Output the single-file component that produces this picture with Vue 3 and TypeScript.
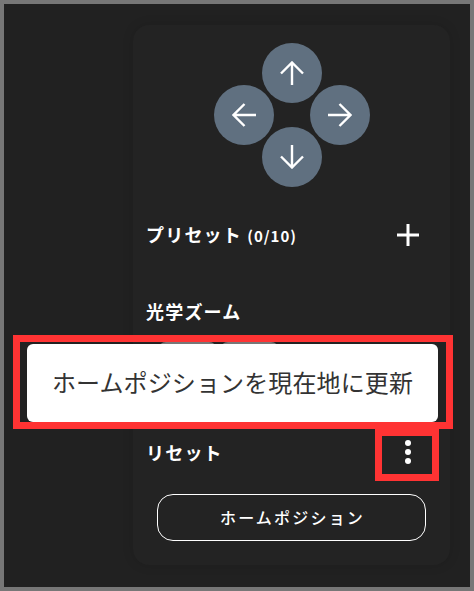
<script setup lang="ts">
type Dir = { name: string; d: string }
const dirs: Dir[] = [
  { name: 'up', d: 'M12 24V2M1 12.5 12 1.5l11 11' },
  { name: 'left', d: 'M24 12H2M12.5 1 1.5 12l11 11' },
  { name: 'right', d: 'M0 12h22M11.5 1l11 11-11 11' },
  { name: 'down', d: 'M12 0v22M1 11.5l11 11 11-11' },
]
</script>

<template>
  <div class="frame">
    <section class="panel">
      <div class="pad">
        <button v-for="dir in dirs" :key="dir.name" class="arrow" :class="dir.name">
          <svg width="24" height="24" viewBox="0 0 24 24" fill="none" stroke="#fff" stroke-width="2.4">
            <path :d="dir.d" />
          </svg>
        </button>
      </div>

      <div class="row preset">
        <h2 class="label">プリセット <small>(0/10)</small></h2>
        <svg class="plus" width="24" height="24" viewBox="0 0 24 24" fill="none" stroke="#fff" stroke-width="3">
          <path d="M12 1v22M1 12h22" />
        </svg>
      </div>

      <h2 class="label zoom-label">光学ズーム</h2>
      <div class="zoom-buttons">
        <span class="seg"></span>
        <span class="seg"></span>
      </div>

      <div class="row reset">
        <h2 class="label">リセット</h2>
        <span class="more">
          <i></i><i></i><i></i>
        </span>
      </div>

      <button class="home">ホームポジション</button>
    </section>

    <div class="highlight big"></div>
    <div class="menu">ホームポジションを現在地に更新</div>
    <div class="highlight small"></div>
  </div>
</template>

<style>
html, body { margin: 0; background: #222; }
</style>

<style scoped>
.frame {
  position: relative;
  box-sizing: border-box;
  width: 474px;
  height: 591px;
  padding: 21px 20px 22px 129px;
  border: 4px solid #777;
  background: #212121;
  font-family: "Noto Sans CJK JP", sans-serif;
  color: #fff;
  overflow: hidden;
}
.panel {
  box-sizing: border-box;
  width: 317px;
  height: 540px;
  padding: 18px 24px 0 13px;
  border-radius: 16px;
  background: #232323;
  box-shadow: 0 0 12px rgba(0, 0, 0, 0.12);
}
.pad {
  position: relative;
  width: 156px;
  height: 144px;
  margin-left: 68px;
}
.arrow {
  position: absolute;
  display: flex;
  align-items: center;
  justify-content: center;
  width: 60px;
  height: 60px;
  padding: 0;
  border: 0;
  border-radius: 50%;
  background: #607080;
}
.up { left: 48px; top: 0; }
.left { left: 0; top: 42px; }
.right { left: 96px; top: 42px; }
.down { left: 48px; top: 84px; }
.row {
  display: flex;
  align-items: center;
  justify-content: space-between;
}
.label {
  margin: 0;
  font-size: 18px;
  font-weight: 700;
  letter-spacing: 1.2px;
  line-height: 24px;
}
.label small {
  font-family: "Noto Sans CJK JP", sans-serif;
  font-size: 15px;
  letter-spacing: 1px;
}
.preset {
  margin-top: 36px;
  padding-right: 6px;
  height: 24px;
}
.zoom-label {
  margin-top: 52px;
}
.zoom-buttons {
  display: flex;
  gap: 3px;
  margin: 19px 0 0 12px;
}
.seg {
  width: 59px;
  height: 40px;
  border-radius: 8px 8px 0 0;
  background: #777;
}
.reset {
  margin-top: 58px;
}
.more {
  display: flex;
  flex-direction: column;
  gap: 3px;
  margin-right: 15px;
}
.more i {
  width: 6px;
  height: 6px;
  border-radius: 50%;
  background: #fff;
}
.home {
  display: block;
  box-sizing: border-box;
  width: 269px;
  height: 47px;
  margin: 30px 0 0 11px;
  padding: 0 0 1px 2px;
  border: 1px solid #fff;
  border-radius: 16px;
  background: transparent;
  color: #fff;
  font-family: inherit;
  font-size: 16px;
  font-weight: 500;
  letter-spacing: 2.2px;
}
.highlight {
  position: absolute;
  box-sizing: border-box;
  border: 7px solid #ff3333;
}
.big { left: 9px; top: 331px; width: 440px; height: 94px; }
.small { left: 371px; top: 425px; width: 64px; height: 52px; }
.menu {
  position: absolute;
  left: 23px;
  top: 340px;
  box-sizing: border-box;
  width: 411px;
  height: 78px;
  padding-bottom: 3px;
  display: flex;
  align-items: center;
  justify-content: center;
  border-radius: 6px;
  background: #fff;
  color: #333;
  font-size: 24px;
  letter-spacing: 0.13px;
}
</style>
